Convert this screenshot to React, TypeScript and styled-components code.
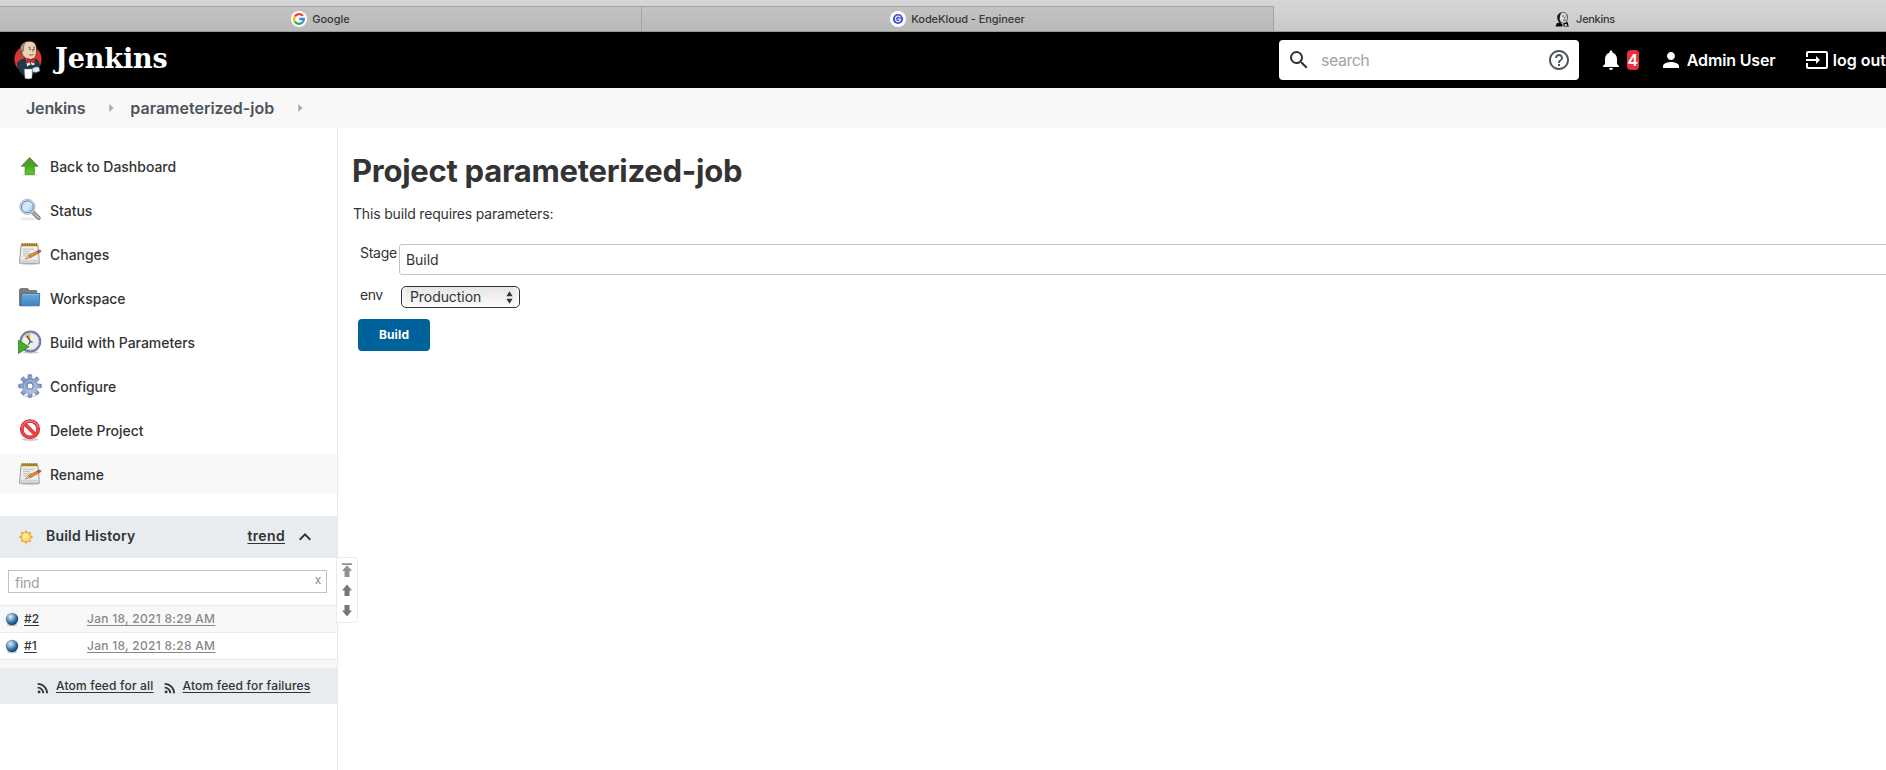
import React from 'react';
import styled, { createGlobalStyle, css } from 'styled-components';
import {
  MdSearch,
  MdHelpOutline,
  MdNotifications,
  MdPerson,
  MdInput,
  MdRssFeed,
  MdKeyboardArrowUp,
} from 'react-icons/md';

const GlobalStyle = createGlobalStyle`
  * { box-sizing: border-box; }
  html, body { margin: 0; padding: 0; }
  body {
    overflow: hidden;
    background: #fff;
    color: #333;
    font-family: Inter, "Liberation Sans", sans-serif;
    font-size: 14px;
    line-height: 20px;
  }
  a { color: inherit; }
  svg { display: block; flex: none; }
`;

/* ---------- page frame ---------- */

const Page = styled.div`
  display: flex;
  flex-direction: column;
  width: 100%;
  height: 770px;
  overflow: hidden;
  position: relative;
`;

const TabStrip = styled.div`
  display: flex;
  flex: none;
  height: 32px;
  background: linear-gradient(#d7d7d7, #c8c8c8);
  border-bottom: 1px solid #999;
`;

const BrowserTab = styled.div<{ $active?: boolean; $width: number; $gap?: number; $spacing?: number; $shift?: number }>`
  display: flex;
  flex: none;
  align-items: center;
  justify-content: center;
  gap: ${p => p.$gap ?? 5}px;
  width: ${p => p.$width}px;
  padding-left: ${p => p.$shift ?? 0}px;
  font-size: 11px;
  font-weight: 500;
  letter-spacing: ${p => p.$spacing ?? 0}px;
  line-height: 14px;
  color: #363636;
  ${p =>
    p.$active
      ? css`
          margin-top: 7px;
        `
      : css`
          margin-top: 6px;
          border-top: 1px solid #a3a3a3;
          border-right: 1px solid #a3a3a3;
          background: linear-gradient(#c3c3c3, #b9b9b9);
        `}
`;

const Tooltip = styled.div`
  position: absolute;
  left: 8px;
  top: 18px;
  width: 55px;
  height: 19px;
  text-align: center;
  font-size: 11px;
  font-weight: 500;
  letter-spacing: -0.2px;
  line-height: 19px;
  color: #111;
  background: #c6c6c6;
  box-shadow: 0 0 0 1px rgba(120, 120, 120, 0.45), 0 1px 4px rgba(0, 0, 0, 0.3);
`;

const Header = styled.header`
  display: flex;
  flex: none;
  align-items: center;
  height: 56px;
  padding-left: 13px;
  background: #000;
  color: #fff;
  font-size: 16px;
  font-weight: 600;
`;

const Wordmark = styled.span`
  margin-left: 12px;
  font: 700 27px/40px "DejaVu Serif", serif;
  letter-spacing: -0.1px;
  transform: translateY(-1px);
`;

const SearchBox = styled.div`
  display: flex;
  align-items: center;
  flex: none;
  width: 300px;
  height: 40px;
  margin-left: auto;
  padding: 0 8px;
  border-radius: 4px;
  background: #fff;
  color: #333;
`;

const SearchHint = styled.span`
  flex: 1;
  margin-left: 10px;
  font-weight: 400;
  letter-spacing: -0.5px;
  color: #a3a3a3;
`;

const HeaderTools = styled.div`
  display: flex;
  align-items: center;
  flex: none;
  width: 307px;
  padding-left: 20px;
  white-space: nowrap;
`;

const Badge = styled.span`
  width: 20px;
  height: 20px;
  margin: 0 20px 0 4px;
  border-radius: 4px;
  text-align: center;
  background: #e8303f;
`;

const HeaderLabel = styled.span<{ $width?: number; $spacing: number }>`
  flex: none;
  margin-left: 4px;
  width: ${p => (p.$width ? `${p.$width}px` : 'auto')};
  letter-spacing: ${p => p.$spacing}px;
`;

const Crumbs = styled.nav`
  display: flex;
  flex: none;
  align-items: center;
  height: 40px;
  padding-left: 26px;
  background: #f8f8f8;
  color: #4d545d;
  font-size: 16px;
  font-weight: 600;
`;

const Crumb = styled.span<{ $spacing?: number }>`
  letter-spacing: ${p => p.$spacing ?? 0}px;
`;

const CrumbArrow = styled.svg`
  margin: 0 16px 0 24px;
`;

const Body = styled.div`
  display: flex;
  flex: 1;
  min-height: 0;
`;

/* ---------- side panel ---------- */

const Side = styled.aside`
  display: flex;
  flex: none;
  flex-direction: column;
  width: 338px;
  border-right: 1px solid #e6ecee;
  position: relative;
`;

const TaskList = styled.div`
  display: flex;
  flex-direction: column;
  gap: 4px;
  padding-top: 18px;
`;

const Task = styled.div<{ $active?: boolean }>`
  display: flex;
  align-items: center;
  height: 40px;
  padding-left: 18px;
  gap: 8px;
  font-weight: 500;
  letter-spacing: -0.03px;
  background: ${p => (p.$active ? '#f8f8f8' : 'transparent')};
  span { padding-top: 1px; }
`;

const HistoryHead = styled.div`
  display: flex;
  align-items: center;
  height: 42px;
  margin-top: 22px;
  padding: 0 20px 0 18px;
  font-weight: 600;
  background: #e6ecef;
`;

const HistoryTitle = styled.span`
  flex: 1;
  margin: -2px 0 0 12px;
  letter-spacing: 0.22px;
`;

const TrendLink = styled.a`
  margin: -2px 8px 0 0;
  letter-spacing: 0.35px;
  text-decoration: underline;
  text-underline-offset: 2px;
`;

const FindRow = styled.div`
  display: flex;
  justify-content: space-between;
  height: 23px;
  margin: 12px 10px 12px 8px;
  padding: 0 5px 0 6px;
  border: 1px solid #c2c2c2;
  line-height: 23px;
  letter-spacing: -0.25px;
  color: #a0a0a0;
`;

const ClearMark = styled.span`
  font-size: 12px;
  line-height: 18px;
  color: #888;
`;

const BuildRow = styled.div<{ $odd?: boolean }>`
  display: flex;
  align-items: center;
  height: 27px;
  padding-left: 5px;
  border-top: 1px solid #e6ecee;
  font-size: 12px;
  font-weight: 500;
  background: ${p => (p.$odd ? '#f8f8f8' : '#fff')};
  a {
    text-decoration: underline;
    text-underline-offset: 2px;
  }
`;

const BuildNumber = styled.a`
  width: 63px;
  margin-left: 5px;
  span { letter-spacing: 0.2px; }
`;

const BuildDate = styled.a`
  letter-spacing: 0.28px;
  color: #888;
`;

const HistoryTail = styled.div`
  height: 9px;
  border-top: 1px solid #e6ecee;
  background: #f8f8f8;
`;

const FeedBar = styled.div`
  display: flex;
  align-items: center;
  height: 36px;
  padding-left: 35px;
  font-size: 12px;
  font-weight: 500;
  letter-spacing: 0.18px;
  background: #e6ecef;
  svg { margin-top: 3px; }
  a {
    margin: 0 8px 0 5px;
    text-underline-offset: 2px;
  }
`;

const Pager = styled.div`
  position: absolute;
  left: 336px;
  top: 429px;
  display: flex;
  flex-direction: column;
  width: 22px;
  height: 66px;
  padding: 4px 0 0 5px;
  border: 1px solid #e6ecee;
  border-radius: 0 4px 4px 0;
  background: #fff;
`;

/* ---------- main panel ---------- */

const Main = styled.main`
  flex: 1;
  min-width: 0;
  padding: 23px 0 0 15px;
`;

const Title = styled.h1`
  margin: 0 0 13px -1px;
  font-size: 31px;
  font-weight: 700;
  letter-spacing: -0.27px;
  line-height: 40px;
`;

const Intro = styled.p`
  margin: 0 0 20px;
  letter-spacing: -0.17px;
`;

const FieldRow = styled.div<{ $height: number }>`
  display: flex;
  height: ${p => p.$height}px;
  margin-bottom: 11px;
  padding-left: 7px;
`;

const FieldLabel = styled.label<{ $width: number; $lift?: number; $spacing: number }>`
  flex: none;
  width: ${p => p.$width}px;
  margin-top: ${p => p.$lift ?? 0}px;
  letter-spacing: ${p => p.$spacing}px;
  line-height: 20px;
`;

const TextField = styled.div`
  flex: none;
  width: 1600px;
  padding-left: 6px;
  border: 1px solid #c2c2c2;
  border-radius: 3px;
  line-height: 30px;
  letter-spacing: -0.05px;
`;

const Select = styled.div`
  display: flex;
  align-items: center;
  justify-content: space-between;
  width: 119px;
  padding: 0 6px 0 8px;
  border: 1px solid #333;
  border-radius: 5px;
  letter-spacing: -0.07px;
  background: linear-gradient(#e6e6e6, #fbfbfb);
  box-shadow: inset 4px 0 4px -3px #fff, inset -4px 0 4px -3px #fff;
`;

const BuildButton = styled.button`
  display: block;
  width: 72px;
  height: 32px;
  margin-left: 5px;
  padding: 0 0 1px;
  border: 0;
  border-radius: 4px;
  background: #00629b;
  color: #fff;
  font: 700 12px/20px Inter, sans-serif;
  letter-spacing: 0.15px;
`;

/* ---------- drawings ---------- */

const GoogleIcon = () => (
  <svg width="16" height="16" viewBox="0 0 16 16">
    <circle cx="8" cy="8" r="8" fill="#fff" />
    <g fill="none" strokeWidth="2.3">
      <path d="M11.9 4.9A4.9 4.9 0 0 0 3.9 5.4" stroke="#ea4335" />
      <path d="M3.9 5.4A4.9 4.9 0 0 0 3.9 10.7" stroke="#fbbc05" />
      <path d="M3.9 10.7A4.9 4.9 0 0 0 11.4 11.5" stroke="#34a853" />
      <path d="M11.4 11.5A4.9 4.9 0 0 0 12.9 8H8.2" stroke="#4285f4" />
    </g>
  </svg>
);

const KodeKloudIcon = () => (
  <svg width="16" height="16" viewBox="0 0 16 16">
    <circle cx="8" cy="8" r="8" fill="#fff" />
    <circle cx="8" cy="8" r="5.1" fill="#3f4fd8" />
    <path d="M10.4 6.4A2.7 2.7 0 1 0 10.4 9.3V8.1H7.6" fill="none" stroke="#e9ebff" strokeWidth="1.3" />
  </svg>
);

const JenkinsTabIcon = () => (
  <svg width="15" height="15" viewBox="0 0 15 15">
    <path d="M3.4 8.5C1.6 4.5 3.4.8 7.2.6c4-.2 5.900 2.200 5.300 5.500L11.600 9.500 8.800 11.500z" fill="#dcdcdc" stroke="#222" strokeWidth=".7" />
    <path d="M2.800 7.900C1.500 4 3.200 1.200 6.200.7L5 4.200l-.4 3L6 10.800l-2-.4z" fill="#181818" />
    <path d="M7.200 4h1.700M10.400 4h1.100M9.800 5v1.600M8 8.300l2.600-.2" stroke="#222" strokeWidth=".8" fill="none" />
    <path d="M.5 14.500 1.800 11.300 5 10.200 7.600 12.400 7.300 14.500z" fill="#080808" />
    <path d="M8.400 11.600l4.200-1.600 1.200 4.500H8.500z" fill="#080808" />
    <path d="M9.600 12.200h2.200v1.700H9.600z" fill="#eee" />
  </svg>
);

const JenkinsLogo = () => (
  <svg width="30" height="40" viewBox="0 0 30 40">
    <ellipse cx="15" cy="19.300" rx="13.600" ry="13.800" fill="#d33833" />
    <path d="M4.800 22.500c3-2.700 6.200-4 8.800-4.200l10.800 1.800c1.300 1.800 1.700 4.100 2 6.500l-4.400 7.300-12.200 1.300C6 31.400 4.200 27 4.800 22.500z" fill="#1d3a4a" stroke="#10222c" strokeWidth=".8" />
    <path d="M8.200 10C8.200 4.300 11.400 1.200 16.300 1.200c4.700 0 7.200 3 7.200 7.700.2 3.900-.1 8-3.100 10-3.300 1.300-7.100.2-9.500-2.500C8.800 15 8 13.300 8.200 10z" fill="#efd0b4" stroke="#3a2a22" strokeWidth=".7" />
    <path d="M12.200 2.300C8.700 3.300 6.900 6.800 7.600 10.600L9.600 12l1.100-2.200c-.3-3 .2-5.200 1.500-7.500z" fill="#9b9894" stroke="#4a4744" strokeWidth=".5" />
    <path d="M9.400 10.500c-1.500.2-1.400 3.200.6 3.600" fill="none" stroke="#5c4335" strokeWidth=".7" />
    <path d="M15.600 7.600l2-.5M20.200 7l1.800.4" stroke="#3a2a22" strokeWidth=".7" />
    <circle cx="17" cy="9.300" r=".7" fill="#221a16" />
    <circle cx="21" cy="9.200" r=".7" fill="#221a16" />
    <path d="M19.300 9.200c.4 1.500 1.300 2.200.2 2.700M16 14.500c1.600.9 3.200.8 4.800-.1" fill="none" stroke="#4f342a" strokeWidth=".7" />
    <path d="M12.600 18.200l3.300 1.200 1.600 5.200-3.400 1.900z" fill="#f5f5f5" />
    <path d="M17.200 20.200l3.700-.8.900 5-3 .8z" fill="#f5f5f5" />
    <path d="M13.600 18.900c1.700-.5 2.800.2 3.700 1.200 1.200-1 3-1.900 4.600-1.300.5 1.400.4 3.100-.1 4.200-1.500.2-3-.6-4.100-1.400-1.200 1-2.700 1.600-3.900 1.400-.7-1.200-.8-2.800-.2-4.100z" fill="#d8292f" stroke="#6f1418" strokeWidth=".5" />
    <path d="M11.300 29h8.200l-.6 9.200c-2 .9-5.200.9-7 0z" fill="#fff" stroke="#777" strokeWidth=".4" />
    <path d="M19.300 28.500c1.500-1.500 4.200-2 6.700-1.300l1 3.700-3.700 1.700-4-.9z" fill="#e6e9ea" stroke="#57666d" strokeWidth=".6" />
  </svg>
);

const UpArrowIcon = () => (
  <svg width="24" height="24" viewBox="0 0 24 24">
    <defs>
      <linearGradient id="up" x1="0" y1="0" x2="0" y2="1">
        <stop offset="0" stopColor="#5d8f3c" />
        <stop offset=".45" stopColor="#4aa02c" />
        <stop offset="1" stopColor="#52d81c" />
      </linearGradient>
    </defs>
    <ellipse cx="12" cy="20.800" rx="8" ry="1.300" fill="#000" opacity=".13" />
    <path d="M11.600 3.600 20 12.200h-3.700v8.100H7.200v-8.100H3.400z" fill="url(#up)" stroke="#3d8220" strokeWidth=".8" />
  </svg>
);

const LensIcon = () => (
  <svg width="24" height="24" viewBox="0 0 24 24">
    <defs>
      <linearGradient id="lens" x1="0" y1="0" x2="1" y2="1">
        <stop offset="0" stopColor="#b7d6f2" />
        <stop offset=".5" stopColor="#d9ebfa" />
        <stop offset="1" stopColor="#8dbbe6" />
      </linearGradient>
    </defs>
    <ellipse cx="11" cy="20.800" rx="9" ry="1.600" fill="#000" opacity=".08" />
    <path d="M14.800 14.300 20.700 20" stroke="#777" strokeWidth="4" strokeLinecap="round" />
    <path d="M15 14.500 20.600 19.900" stroke="#b5b5b5" strokeWidth="2.200" strokeLinecap="round" />
    <circle cx="9.400" cy="8.800" r="7.600" fill="#e4e7ea" stroke="#9ba0a5" strokeWidth=".7" />
    <circle cx="9.400" cy="8.800" r="6" fill="url(#lens)" stroke="#4a86c4" strokeWidth="1" />
  </svg>
);

const NotepadIcon = () => (
  <svg width="24" height="24" viewBox="0 0 24 24">
    <ellipse cx="12" cy="22" rx="9" ry="1.200" fill="#000" opacity=".16" />
    <path d="M3 3.500h17L21.400 21.200H1.500z" fill="#eeeeec" stroke="#8c8c88" strokeWidth=".9" />
    <path d="M2.200 18.800h19" stroke="#d2d2ce" strokeWidth="2" />
    <path d="M3.200 1.500h16.400v2.800H3z" fill="#b89130" />
    <path d="M4.700 1v3M7 1v3M9.300 1v3M11.600 1v3M13.900 1v3M16.200 1v3M18.500 1v3" stroke="#7e5e16" strokeWidth=".7" />
    <path d="M5 7.200h11M5 9.400h7M5 11.600h9M5 13.800h5" stroke="#b9b9b9" strokeWidth=".9" />
    <path d="M7 17 10.600 13.400 12.300 15.700z" fill="#efcf9b" stroke="#7c5a2a" strokeWidth=".5" />
    <path d="M10.600 13.400 19.400 9l1.300 2-8.400 4.700z" fill="#e58f3a" stroke="#8d5318" strokeWidth=".6" />
    <path d="M19.200 9l2.500-1.100c1.300.2 1.600 1.600.8 2.200l-2 1z" fill="#d84a3b" stroke="#983328" strokeWidth=".5" />
  </svg>
);

const FolderIcon = () => (
  <svg width="24" height="24" viewBox="0 0 24 24">
    <defs>
      <linearGradient id="fold" x1="0" y1="0" x2="0" y2="1">
        <stop offset="0" stopColor="#6ea9da" />
        <stop offset="1" stopColor="#3f83bf" />
      </linearGradient>
    </defs>
    <path d="M1.500 19.500V3.600l1-1h7.200l1.800 2h7.200v5H3.800v10z" fill="#7c7c7a" stroke="#5b5b59" strokeWidth=".7" />
    <path d="M3.600 7.500h18.100l-.5 12.300H2.400z" fill="url(#fold)" stroke="#346da4" strokeWidth=".9" />
    <path d="M4.300 8.400h16.500" stroke="#9dc7ea" strokeWidth=".7" />
  </svg>
);

const ClockIcon = () => (
  <svg width="24" height="24" viewBox="0 0 24 24">
    <ellipse cx="13" cy="22.300" rx="8" ry="1.300" fill="#000" opacity=".2" />
    <circle cx="12.400" cy="11.500" r="9.800" fill="#edeef0" stroke="#757b9c" strokeWidth="2.200" />
    <circle cx="12.400" cy="11.500" r="8.500" fill="none" stroke="#b9bdcf" strokeWidth=".8" />
    <path d="M12.300 11.200V3.900a7.500 7.500 0 0 0-5.500 2.300z" fill="#e9b949" />
    <path d="M9 5.800l3.400 5.700-2.200 3.200M12.400 11.500l2.200.8" fill="none" stroke="#3a3a3a" strokeWidth="1.100" />
    <path d="M.5 10.300 11 16.800.5 23.500z" fill="#43b02a" stroke="#2d801a" strokeWidth=".8" />
  </svg>
);

const GearIcon = () => (
  <svg width="24" height="24" viewBox="0 0 24 24">
    <defs>
      <linearGradient id="gear" x1="0" y1="0" x2=".6" y2="1">
        <stop offset="0" stopColor="#5f83b4" />
        <stop offset="1" stopColor="#b6bddd" />
      </linearGradient>
    </defs>
    <ellipse cx="12" cy="22" rx="7" ry="1.300" fill="#000" opacity=".12" />
    <g fill="url(#gear)" stroke="#6379a3" strokeWidth=".7">
      {[0, 45, 90, 135, 180, 225, 270, 315].map(a => (
        <path key={a} d="M9.900 6 10.300.7h3.400L14.100 6z" transform={`rotate(${a} 12 12)`} />
      ))}
    </g>
    <circle cx="12" cy="12" r="8" fill="url(#gear)" />
    <circle cx="12" cy="12" r="5.500" fill="none" stroke="#bcc8e2" strokeWidth=".8" />
    <circle cx="12" cy="12" r="3" fill="#fff" stroke="#6c80a9" strokeWidth=".9" />
  </svg>
);

const DeleteIcon = () => (
  <svg width="24" height="24" viewBox="0 0 24 24">
    <ellipse cx="12" cy="21.500" rx="8.500" ry="1.400" fill="#000" opacity=".2" />
    <circle cx="12" cy="11.200" r="8.200" fill="#fff" stroke="#c9222b" strokeWidth="3.700" />
    <path d="M6.200 5.500 17.800 17" stroke="#c9222b" strokeWidth="3.700" />
    <circle cx="12" cy="11.200" r="8.200" fill="none" stroke="#ee4048" strokeWidth="2.500" />
    <path d="M6.200 5.500 17.800 17" stroke="#ee4048" strokeWidth="2.500" />
    <path d="M3.700 9.500a8.600 8.600 0 0 1 16.600 0" fill="none" stroke="#f88d90" strokeWidth=".9" />
  </svg>
);

const SunIcon = () => (
  <svg width="16" height="16" viewBox="0 0 16 16">
    <g fill="#f3a54a">
      {[0, 45, 90, 135, 180, 225, 270, 315].map(a => (
        <path key={a} d="M5.800 4.200 8 .7l2.200 3.500z" transform={`rotate(${a} 8 8)`} />
      ))}
    </g>
    <circle cx="8" cy="8" r="4.700" fill="#fde36a" stroke="#f0a040" strokeWidth=".9" />
    <circle cx="7.300" cy="7" r="2.300" fill="#fff3a8" />
  </svg>
);

const Ball = () => (
  <svg width="14" height="16" viewBox="0 0 14 16">
    <defs>
      <radialGradient id="ball" cx=".38" cy=".32" r=".7">
        <stop offset="0" stopColor="#e2ecec" />
        <stop offset=".4" stopColor="#7ba6c4" />
        <stop offset=".75" stopColor="#1f629d" />
        <stop offset="1" stopColor="#0e4275" />
      </radialGradient>
    </defs>
    <ellipse cx="7" cy="14" rx="5" ry="1.200" fill="#000" opacity=".2" />
    <circle cx="7" cy="8" r="6.200" fill="url(#ball)" />
  </svg>
);

const Arrow = styled.svg.attrs({ width: 10, height: 20, viewBox: '0 0 10 20' })``;

const TASKS: { label: string; icon: React.ReactNode }[] = [
  { label: 'Back to Dashboard', icon: <UpArrowIcon /> },
  { label: 'Status', icon: <LensIcon /> },
  { label: 'Changes', icon: <NotepadIcon /> },
  { label: 'Workspace', icon: <FolderIcon /> },
  { label: 'Build with Parameters', icon: <ClockIcon /> },
  { label: 'Configure', icon: <GearIcon /> },
  { label: 'Delete Project', icon: <DeleteIcon /> },
  { label: 'Rename', icon: <NotepadIcon /> },
];

const BUILDS = [
  { id: '#2', date: 'Jan 18, 2021 8:29 AM' },
  { id: '#1', date: 'Jan 18, 2021 8:28 AM' },
];

const CrumbSeparator = () => (
  <CrumbArrow width="5" height="8" viewBox="0 0 5 8">
    <path d="M.3 0 4.500 4 .3 8z" fill="#aaa" />
  </CrumbArrow>
);

export default function App() {
  return (
    <Page>
      <GlobalStyle />
      <TabStrip>
        <BrowserTab $width={642}>
          <GoogleIcon />
          Google
        </BrowserTab>
        <BrowserTab $width={632} $spacing={-0.08}>
          <KodeKloudIcon />
          KodeKloud - Engineer
        </BrowserTab>
        <BrowserTab $active $width={622} $gap={6} $spacing={-0.3}>
          <JenkinsTabIcon />
          Jenkins
        </BrowserTab>
      </TabStrip>

      <Header>
        <JenkinsLogo />
        <Wordmark>Jenkins</Wordmark>
        <SearchBox>
          <MdSearch size={24} />
          <SearchHint>search</SearchHint>
          <MdHelpOutline size={24} color="#4d545d" />
        </SearchBox>
        <HeaderTools>
          <MdNotifications size={24} />
          <Badge>4</Badge>
          <MdPerson size={24} />
          <HeaderLabel $width={118} $spacing={-0.15}>Admin User</HeaderLabel>
          <MdInput size={24} />
          <HeaderLabel $spacing={0}>log out</HeaderLabel>
        </HeaderTools>
      </Header>

      <Crumbs>
        <Crumb $spacing={-0.15}>Jenkins</Crumb>
        <CrumbSeparator />
        <Crumb>parameterized-job</Crumb>
        <CrumbSeparator />
      </Crumbs>

      <Body>
        <Side>
          <TaskList>
            {TASKS.map(t => (
              <Task key={t.label} $active={t.label === 'Rename'}>
                {t.icon}
                <span>{t.label}</span>
              </Task>
            ))}
          </TaskList>
          <HistoryHead>
            <SunIcon />
            <HistoryTitle>Build History</HistoryTitle>
            <TrendLink>trend</TrendLink>
            <MdKeyboardArrowUp size={24} />
          </HistoryHead>
          <FindRow>
            find
            <ClearMark>x</ClearMark>
          </FindRow>
          {BUILDS.map((b, i) => (
            <BuildRow key={b.id} $odd={i % 2 === 0}>
              <Ball />
              <BuildNumber as="div">
                <a>{b.id}</a>
              </BuildNumber>
              <BuildDate>{b.date}</BuildDate>
            </BuildRow>
          ))}
          <HistoryTail />
          <FeedBar>
            <MdRssFeed size={16} />
            <a href="#all">Atom feed for all</a>
            <MdRssFeed size={16} />
            <a href="#failures">Atom feed for failures</a>
          </FeedBar>
          <Pager>
            <Arrow>
              <path d="M0 1.200h10v1.800H0zM5 3.200 10 9H7.500v6h-5V9H0z" fill="#919191" />
            </Arrow>
            <Arrow>
              <path d="M5 2.500 10 8.500H7.500v5.500h-5V8.500H0z" fill="#777" />
            </Arrow>
            <Arrow>
              <path d="M5 14.500 0 8.500h2.500V3h5v5.500H10z" fill="#777" />
            </Arrow>
          </Pager>
        </Side>

        <Main>
          <Title>Project parameterized-job</Title>
          <Intro>This build requires parameters:</Intro>
          <FieldRow $height={31}>
            <FieldLabel $width={39} $lift={-1} $spacing={-0.27}>Stage</FieldLabel>
            <TextField>Build</TextField>
          </FieldRow>
          <FieldRow $height={22}>
            <FieldLabel $width={41} $lift={-1} $spacing={-0.5}>env</FieldLabel>
            <Select>
              Production
              <svg width="7" height="13" viewBox="0 0 7 13">
                <path d="M3.500.3 6.600 5.200H.4zM3.500 12.700.4 7.800h6.200z" fill="#333" />
              </svg>
            </Select>
          </FieldRow>
          <BuildButton>Build</BuildButton>
        </Main>
      </Body>
    </Page>
  );
}
